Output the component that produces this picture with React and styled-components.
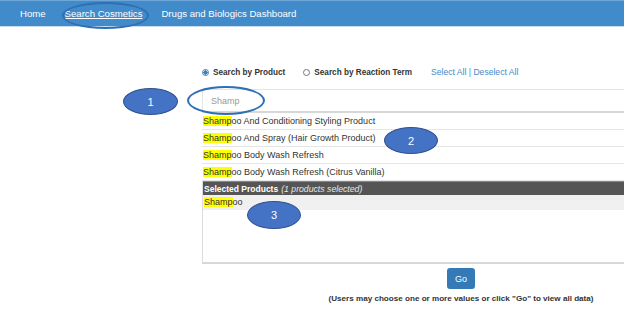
import React from 'react';
import styled, { createGlobalStyle } from 'styled-components';

const GlobalStyle = createGlobalStyle`
  html, body {
    margin: 0;
    padding: 0;
    background: #fff;
    overflow: hidden;
  }
  body {
    font-family: 'Liberation Sans', Arial, sans-serif;
  }
  * { box-sizing: border-box; }
`;

const Page = styled.div`
  position: relative;
  width: 624px;
  height: 313px;
  overflow: hidden;
`;

const NavBar = styled.nav`
  height: 27px;
  background: #428bca;
  border-top: 1px solid #6ea6d8;
  border-bottom: 1px solid #c8dcef;
  display: flex;
  align-items: center;
  padding-left: 20px;
  gap: 19px;
`;

const NavLink = styled.a`
  color: #fff;
  font-size: 9.6px;
  text-decoration: ${(p) => (p.active ? 'underline' : 'none')};
  white-space: nowrap;
`;

const Content = styled.div`
  margin-left: 202px;
  width: 518px;
  padding-top: 38px;
  display: flex;
  flex-direction: column;
`;

const RadioRow = styled.div`
  display: flex;
  align-items: center;
  height: 14px;
`;

const RadioLabel = styled.label`
  display: flex;
  align-items: center;
  gap: 4px;
  font-size: 8.2px;
  font-weight: bold;
  color: #333;
  margin-right: ${(p) => p.gap}px;
  white-space: nowrap;
`;

const RadioDot = styled.span`
  width: 7px;
  height: 7px;
  border-radius: 50%;
  border: 1px solid ${(p) => (p.checked ? '#3d7fc4' : '#777')};
  background: ${(p) => (p.checked ? 'radial-gradient(circle, #3d7fc4 0 2px, #fff 2.2px)' : '#fff')};
`;

const Links = styled.span`
  color: #428bca;
  font-size: 8.6px;
  white-space: nowrap;
`;

const SearchInput = styled.div`
  margin-top: 10px;
  height: 24px;
  border-top: 1px solid #e4e4e4;
  border-left: 1px solid #e4e4e4;
  border-bottom: 2px solid #d8d8d8;
  display: flex;
  align-items: center;
  padding-left: 8px;
  color: #999;
  font-size: 9px;
`;

const Row = styled.div`
  height: ${(p) => p.h || 17}px;
  border-bottom: 1px solid ${(p) => (p.bg ? 'transparent' : '#e6e6e6')};
  display: flex;
  align-items: center;
  font-size: 9px;
  color: #333;
  padding-left: 1px;
  white-space: nowrap;
  background: ${(p) => p.bg || '#fff'};
`;

const Hit = styled.span`
  background: #ffff00;
`;

const SelectedBox = styled.div`
  border-left: 1px solid #dcdcdc;
  border-bottom: 2px solid #d8d8d8;
  height: 83px;
  display: flex;
  flex-direction: column;
`;

const SelectedHeader = styled.div`
  height: 14px;
  background: #555;
  border-top: 1px solid #888;
  color: #fff;
  font-size: 8.5px;
  font-weight: bold;
  display: flex;
  align-items: center;
  padding-left: 1px;
  white-space: nowrap;

  em {
    font-weight: normal;
    font-size: 8.7px;
    color: #e8e8e8;
    margin-left: 3px;
  }
`;

const Footer = styled.div`
  display: flex;
  flex-direction: column;
  align-items: center;
  padding-top: 4px;
  gap: 5px;
`;

const GoButton = styled.button`
  width: 28px;
  height: 21px;
  border: none;
  border-radius: 3px;
  background: #337ab7;
  color: #fff;
  font-size: 9px;
  font-family: inherit;
  padding: 0;
`;

const Caption = styled.div`
  font-size: 8.1px;
  font-weight: bold;
  color: #333;
  white-space: nowrap;
`;

const Callout = styled.div`
  position: absolute;
  left: ${(p) => p.x}px;
  top: ${(p) => p.y}px;
  width: ${(p) => p.w}px;
  height: ${(p) => p.h}px;
  border-radius: 50%;
  border: ${(p) => (p.ring ? '2px solid #2e6fb5' : '1px solid #2f528f')};
  background: ${(p) => (p.ring ? 'transparent' : '#4472c4')};
  color: #fff;
  font-size: 11px;
  display: flex;
  align-items: center;
  justify-content: center;
`;

const results = [
  'oo And Conditioning Styling Product',
  'oo And Spray (Hair Growth Product)',
  'oo Body Wash Refresh',
  'oo Body Wash Refresh (Citrus Vanilla)',
];

export default function App() {
  return (
    <Page>
      <GlobalStyle />
      <NavBar>
        <NavLink>Home</NavLink>
        <NavLink active>Search Cosmetics</NavLink>
        <NavLink>Drugs and Biologics Dashboard</NavLink>
      </NavBar>
      <Content>
        <RadioRow>
          <RadioLabel gap={18}>
            <RadioDot checked />
            Search by Product
          </RadioLabel>
          <RadioLabel gap={19}>
            <RadioDot />
            Search by Reaction Term
          </RadioLabel>
          <Links>Select All | Deselect All</Links>
        </RadioRow>
        <SearchInput>Shamp</SearchInput>
        {results.map((r) => (
          <Row key={r}>
            <Hit>Shamp</Hit>
            {r}
          </Row>
        ))}
        <SelectedBox>
          <SelectedHeader>
            Selected Products<em>(1 products selected)</em>
          </SelectedHeader>
          <Row bg="#f0f0f0" h={15}>
            <Hit>Shamp</Hit>oo
          </Row>
        </SelectedBox>
        <Footer>
          <GoButton>Go</GoButton>
          <Caption>(Users may choose one or more values or click "Go" to view all data)</Caption>
        </Footer>
      </Content>

      <Callout ring x={62} y={2} w={87} h={27} />
      <Callout ring x={187} y={86} w={78} h={29} />
      <Callout x={123} y={88} w={55} h={27}>1</Callout>
      <Callout x={384} y={127} w={54} h={27}>2</Callout>
      <Callout x={247} y={201} w={54} h={28}>3</Callout>
    </Page>
  );
}
